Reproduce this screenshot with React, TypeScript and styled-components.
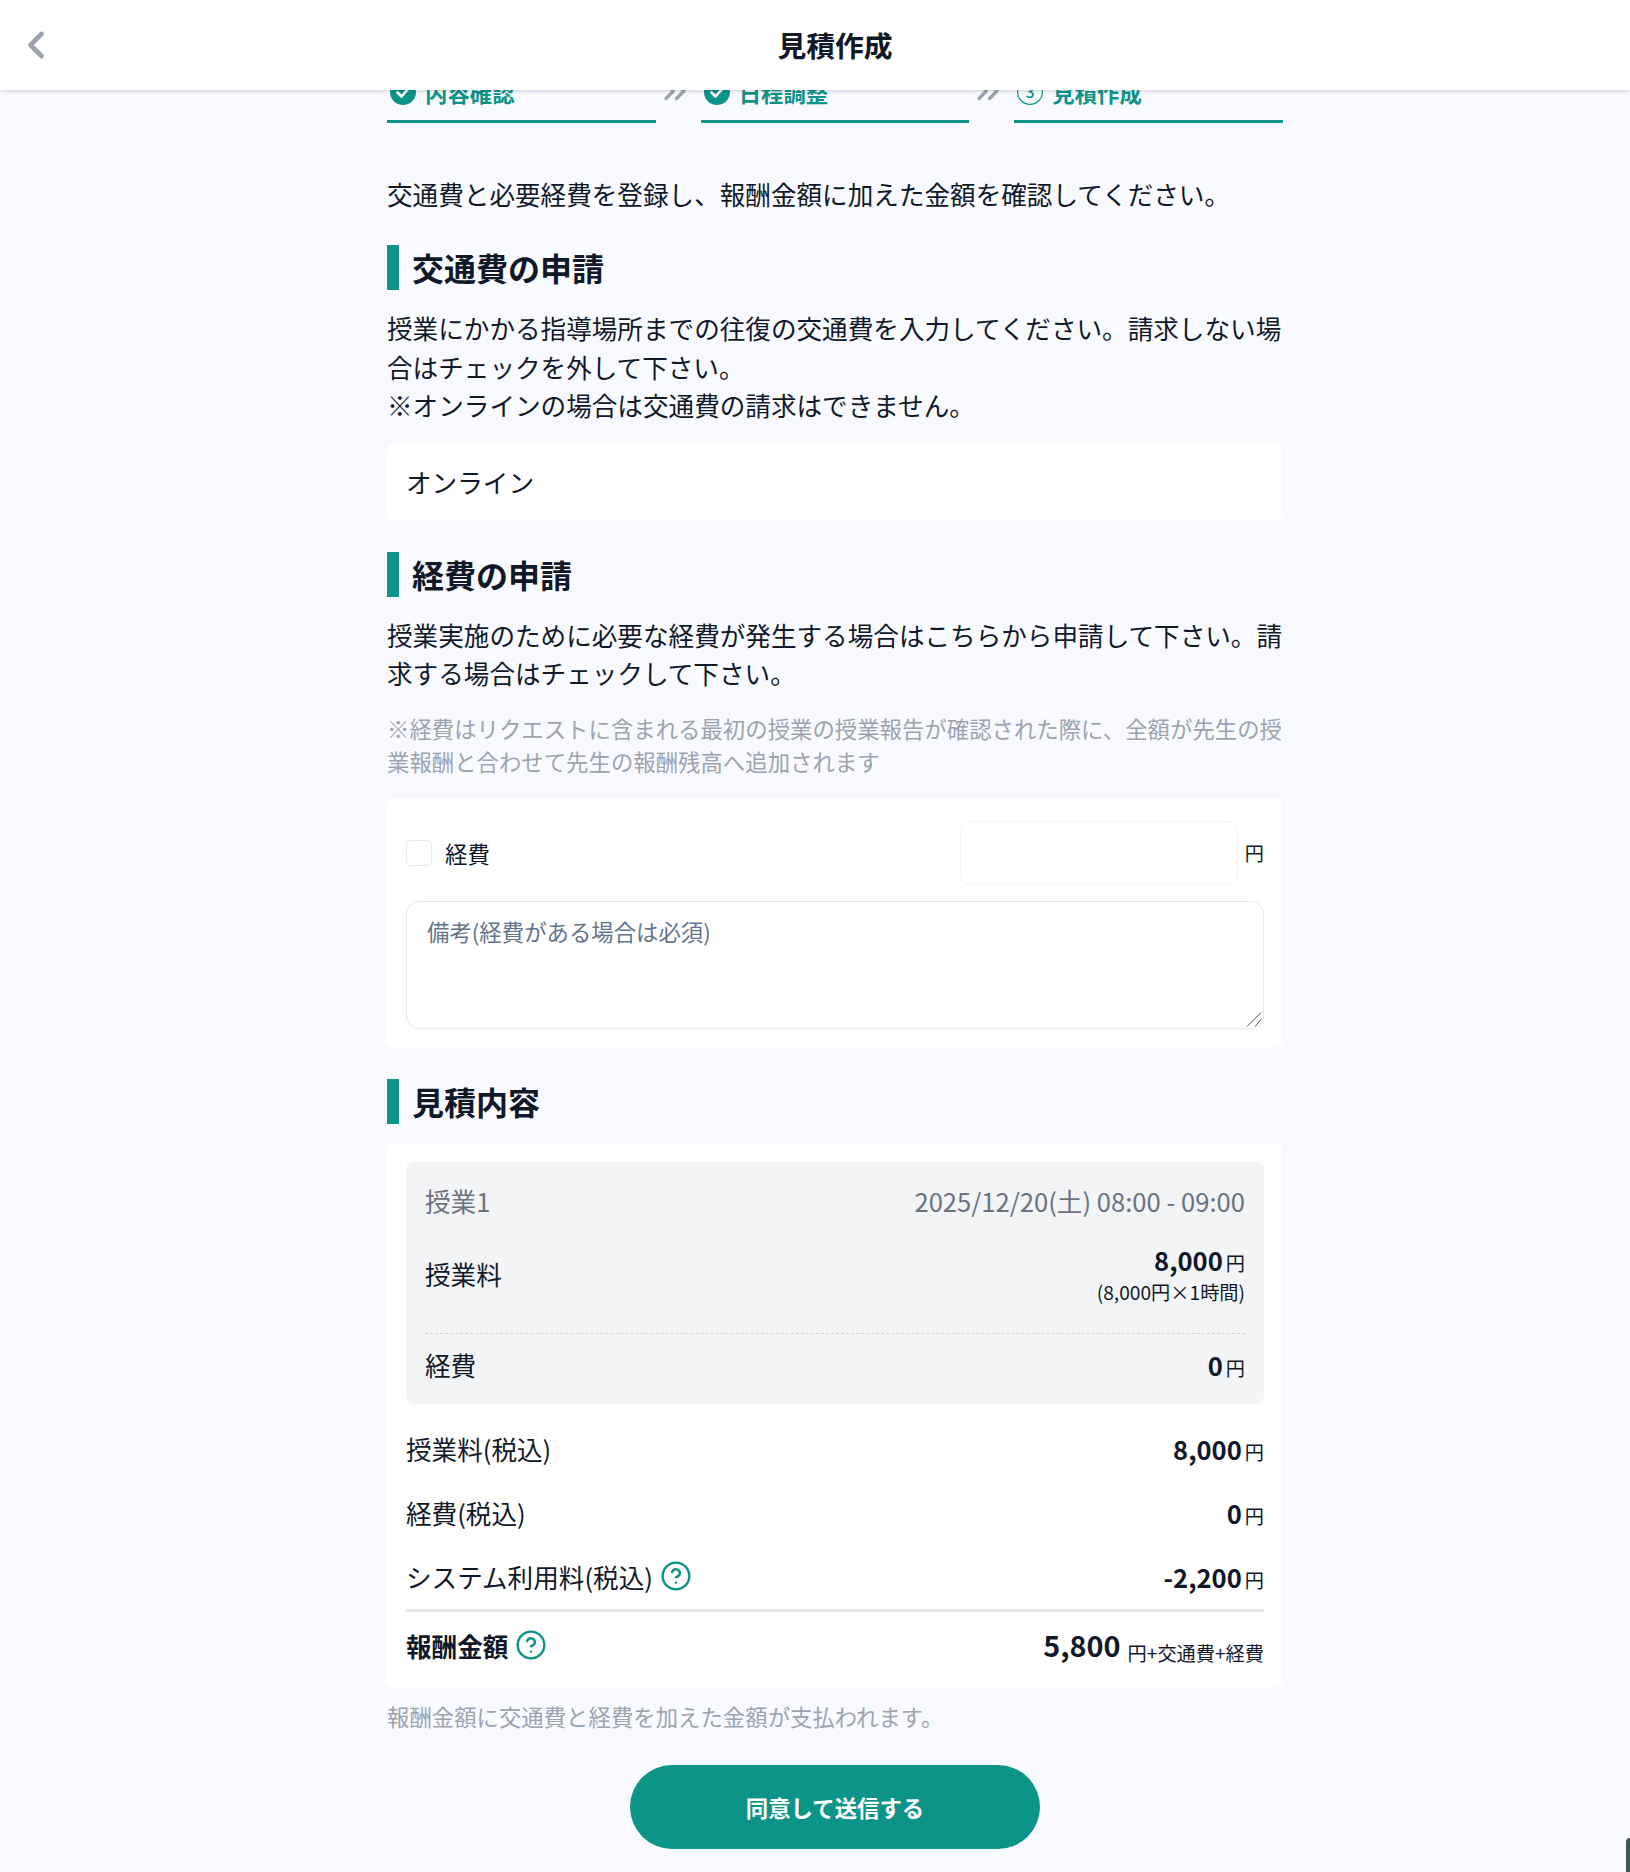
import React, { FC } from 'react';
import styled, { createGlobalStyle } from 'styled-components';
import { ChevronLeft, ChevronsRight, CircleHelp } from 'lucide-react';

const GlobalStyle = createGlobalStyle`
  * {
    box-sizing: border-box;
  }

  html,
  body {
    margin: 0;
    padding: 0;
  }

  body {
    background: #f9faff;
    color: #111827;
    font-family: 'Noto Sans CJK JP', 'Noto Sans', sans-serif;
    font-size: 25.6px;
    line-height: 38.4px;
  }
`;

const StyledPage = styled.div`
  width: 1630px;
  height: 1872px;
  overflow: hidden;
  position: relative;
`;

const StyledCornerMark = styled.span`
  position: absolute;
  right: 0;
  bottom: 0;
  width: 4px;
  height: 34px;
  background: #3f5a52;
  border-top-left-radius: 4px;
`;

const StyledHeader = styled.header`
  position: absolute;
  top: 0;
  left: 0;
  right: 0;
  height: 90px;
  background: #fff;
  box-shadow: 0 1px 4px rgba(0, 0, 0, 0.18);
  display: flex;
  align-items: center;
  justify-content: center;
  padding-left: 40px;
  z-index: 2;
`;

const StyledBack = styled.button`
  position: absolute;
  left: 14px;
  top: 23px;
  width: 44px;
  height: 44px;
  padding: 0;
  border: none;
  background: none;
  color: #9ca3af;
`;

const StyledTitle = styled.h1`
  margin: 0;
  font-size: 28.8px;
  font-weight: 700;
`;

const StyledMain = styled.main`
  width: 896px;
  margin-left: 387px;
  padding-top: 78px;
`;

const StyledSteps = styled.div`
  display: flex;
  align-items: flex-start;
`;

const StyledStep = styled.div`
  flex: 1;
  height: 45px;
  padding: 0 0 0 3px;
  border-bottom: 3px solid #0d9488;
  display: flex;
  align-items: flex-start;
  gap: 9px;
  color: #0d9488;
  font-size: 22.4px;
  font-weight: 700;
  line-height: 29px;
`;

const StyledStepIcon = styled.svg`
  width: 26px;
  height: 26px;
  margin-top: 1px;
  flex-shrink: 0;
`;

const StyledArrow = styled.div`
  width: 45px;
  height: 36px;
  margin-top: -5px;
  flex-shrink: 0;
  color: #9ca3af;
`;

const StyledArrowIcon = styled(ChevronsRight)`
  display: block;
  width: 36px;
  height: 36px;
  margin-left: 1px;
`;

const StyledIntro = styled.p`
  margin: 52px 0 0;
`;

const StyledHeading = styled.h2<{ $gap: number }>`
  margin: ${({ $gap }) => $gap}px 0 0;
  height: 45px;
  border-left: 12px solid #0d9488;
  padding-left: 13px;
  font-size: 32px;
  font-weight: 700;
  line-height: 44px;
`;

const StyledText = styled.p`
  margin: 19px 0 0;
`;

const StyledNote = styled.p<{ $gap: number }>`
  margin: ${({ $gap }) => $gap}px 0 0;
  color: #9ca3af;
  font-size: 22.4px;
  line-height: 33.6px;
`;

const StyledCard = styled.div<{ $top?: number; $bottom?: number }>`
  margin-top: 19px;
  background: #fff;
  border-radius: 6px;
  padding: ${({ $top = 19 }) => $top}px 19px ${({ $bottom = 19 }) => $bottom}px;
`;

const StyledExpenseRow = styled.div`
  display: flex;
  align-items: center;
`;

const StyledCheckbox = styled.span`
  width: 26px;
  height: 26px;
  border: 1px solid #e5e7eb;
  border-radius: 5px;
  background: #fff;
`;

const StyledCheckLabel = styled.span`
  margin-left: 13px;
  flex: 1;
  font-size: 22.4px;
`;

const StyledInput = styled.input`
  width: 278px;
  height: 64px;
  border: 1px solid #f3f4f6;
  border-radius: 10px;
  background: #fff;
  outline: none;
`;

const StyledInputUnit = styled.span`
  margin-left: 7px;
  font-size: 19.2px;
`;

const StyledTextareaWrap = styled.div`
  position: relative;
  margin-top: 16px;
`;

const StyledTextarea = styled.textarea`
  display: block;
  width: 100%;
  height: 128px;
  padding: 13px 20px;
  border: 1px solid #e2e8f0;
  border-radius: 13px;
  background: #fff;
  outline: none;
  resize: none;
  font-family: inherit;
  font-size: 22.4px;
  line-height: 33.6px;

  &::placeholder {
    color: #64748b;
    opacity: 1;
  }
`;

const StyledResizer = styled.svg`
  position: absolute;
  right: 2px;
  bottom: 2px;
  width: 16px;
  height: 16px;
`;

const StyledLessonBox = styled.div`
  background: #f3f4f6;
  border-radius: 8px;
  padding: 20px 19px 20px;
`;

const StyledRow = styled.div<{ $gap?: number; $muted?: boolean }>`
  margin-top: ${({ $gap = 0 }) => $gap}px;
  display: flex;
  align-items: center;
  justify-content: space-between;
  color: ${({ $muted }) => ($muted ? '#6b7280' : 'inherit')};
`;

const StyledFeeValue = styled.div`
  text-align: right;
`;

const StyledSub = styled.div`
  margin-top: -2px;
  font-size: 19.2px;
  line-height: 28.8px;
`;

const StyledDashed = styled.div`
  margin-top: 26px;
  border-top: 1px dashed #d1d5db;
`;

const StyledAmount = styled.span`
  font-weight: 700;
`;

const StyledUnit = styled.span`
  margin-left: 3px;
  font-size: 19.2px;
  line-height: 1;
`;

const StyledLabel = styled.span`
  display: flex;
  align-items: center;
  gap: 7px;
`;

const StyledDivider = styled.div`
  margin-top: 13px;
  border-top: 3px solid #e5e7eb;
`;

const StyledTotalLabel = styled(StyledLabel)`
  font-weight: 700;
`;

const StyledTotal = styled.span`
  font-size: 28.8px;
  font-weight: 700;
  line-height: 1;
`;

const StyledTotalUnit = styled.span`
  margin-left: 7px;
  font-size: 19.2px;
  line-height: 1;
  vertical-align: -4px;
`;

const StyledHelp = styled(CircleHelp)`
  color: #0d9488;
  width: 32px;
  height: 32px;
  margin-top: -2px;
`;

const StyledButton = styled.button`
  display: block;
  width: 410px;
  height: 84px;
  margin: 32px auto 0;
  border: none;
  border-radius: 42px;
  background: #0d9488;
  color: #fff;
  font-family: inherit;
  font-size: 22.4px;
  font-weight: 700;
`;

const DoneIcon: FC = () => (
  <StyledStepIcon viewBox="0 0 26 26">
    <circle cx="13" cy="13" r="13" fill="#0d9488" />
    <path d="M7.5 13.5l4 4 7-8" fill="none" stroke="#fff" strokeWidth="2.6" strokeLinecap="round" strokeLinejoin="round" />
  </StyledStepIcon>
);

const CurrentIcon: FC = () => (
  <StyledStepIcon viewBox="0 0 26 26">
    <circle cx="13" cy="13" r="12.4" fill="none" stroke="#0d9488" strokeWidth="1.2" />
    <text x="13" y="19" textAnchor="middle" fontSize="16" fontWeight="500" fill="#0d9488">3</text>
  </StyledStepIcon>
);

const Yen: FC<{ value: string }> = ({ value }) => (
  <span>
    <StyledAmount>{value}</StyledAmount>
    <StyledUnit>円</StyledUnit>
  </span>
);

const App: FC = () => {
  return (
    <StyledPage>
      <GlobalStyle />
      <StyledHeader>
        <StyledBack aria-label="戻る">
          <ChevronLeft size={44} strokeWidth={2.6} />
        </StyledBack>
        <StyledTitle>見積作成</StyledTitle>
      </StyledHeader>
      <StyledMain>
        <StyledSteps>
          <StyledStep><DoneIcon />内容確認</StyledStep>
          <StyledArrow><StyledArrowIcon strokeWidth={2.2} /></StyledArrow>
          <StyledStep><DoneIcon />日程調整</StyledStep>
          <StyledArrow><StyledArrowIcon strokeWidth={2.2} /></StyledArrow>
          <StyledStep><CurrentIcon />見積作成</StyledStep>
        </StyledSteps>

        <StyledIntro>交通費と必要経費を登録し、報酬金額に加えた金額を確認してください。</StyledIntro>

        <StyledHeading $gap={32}>交通費の申請</StyledHeading>
        <StyledText>
          授業にかかる指導場所までの往復の交通費を入力してください。請求しない場合はチェックを外して下さい。
          <br />
          ※オンラインの場合は交通費の請求はできません。
        </StyledText>
        <StyledCard>オンライン</StyledCard>

        <StyledHeading $gap={32}>経費の申請</StyledHeading>
        <StyledText>
          授業実施のために必要な経費が発生する場合はこちらから申請して下さい。請求する場合はチェックして下さい。
        </StyledText>
        <StyledNote $gap={19}>
          ※経費はリクエストに含まれる最初の授業の授業報告が確認された際に、全額が先生の授業報酬と合わせて先生の報酬残高へ追加されます
        </StyledNote>
        <StyledCard $top={23} $bottom={18}>
          <StyledExpenseRow>
            <StyledCheckbox />
            <StyledCheckLabel>経費</StyledCheckLabel>
            <StyledInput type="text" />
            <StyledInputUnit>円</StyledInputUnit>
          </StyledExpenseRow>
          <StyledTextareaWrap>
            <StyledTextarea placeholder="備考(経費がある場合は必須)" />
            <StyledResizer viewBox="0 0 16 16">
              <path d="M1 15.5L15 1.5M9 15.5L15 8.5" fill="none" stroke="#555" strokeWidth="1" />
            </StyledResizer>
          </StyledTextareaWrap>
        </StyledCard>

        <StyledHeading $gap={32}>見積内容</StyledHeading>
        <StyledCard $bottom={21}>
          <StyledLessonBox>
            <StyledRow $muted>
              <span>授業1</span>
              <span>2025/12/20(土) 08:00 - 09:00</span>
            </StyledRow>
            <StyledRow $gap={21}>
              <span>授業料</span>
              <StyledFeeValue>
                <Yen value="8,000" />
                <StyledSub>(8,000円×1時間)</StyledSub>
              </StyledFeeValue>
            </StyledRow>
            <StyledDashed />
            <StyledRow $gap={12}>
              <span>経費</span>
              <Yen value="0" />
            </StyledRow>
          </StyledLessonBox>
          <StyledRow $gap={26}>
            <span>授業料(税込)</span>
            <Yen value="8,000" />
          </StyledRow>
          <StyledRow $gap={26}>
            <span>経費(税込)</span>
            <Yen value="0" />
          </StyledRow>
          <StyledRow $gap={25}>
            <StyledLabel>
              システム利用料(税込)
              <StyledHelp strokeWidth={1.8} />
            </StyledLabel>
            <Yen value="-2,200" />
          </StyledRow>
          <StyledDivider />
          <StyledRow $gap={15}>
            <StyledTotalLabel>
              報酬金額
              <StyledHelp strokeWidth={1.8} />
            </StyledTotalLabel>
            <span>
              <StyledTotal>5,800</StyledTotal>
              <StyledTotalUnit>円+交通費+経費</StyledTotalUnit>
            </span>
          </StyledRow>
        </StyledCard>

        <StyledNote $gap={13}>報酬金額に交通費と経費を加えた金額が支払われます。</StyledNote>
        <StyledButton type="button">同意して送信する</StyledButton>
      </StyledMain>
      <StyledCornerMark />
    </StyledPage>
  );
};

export default App;
